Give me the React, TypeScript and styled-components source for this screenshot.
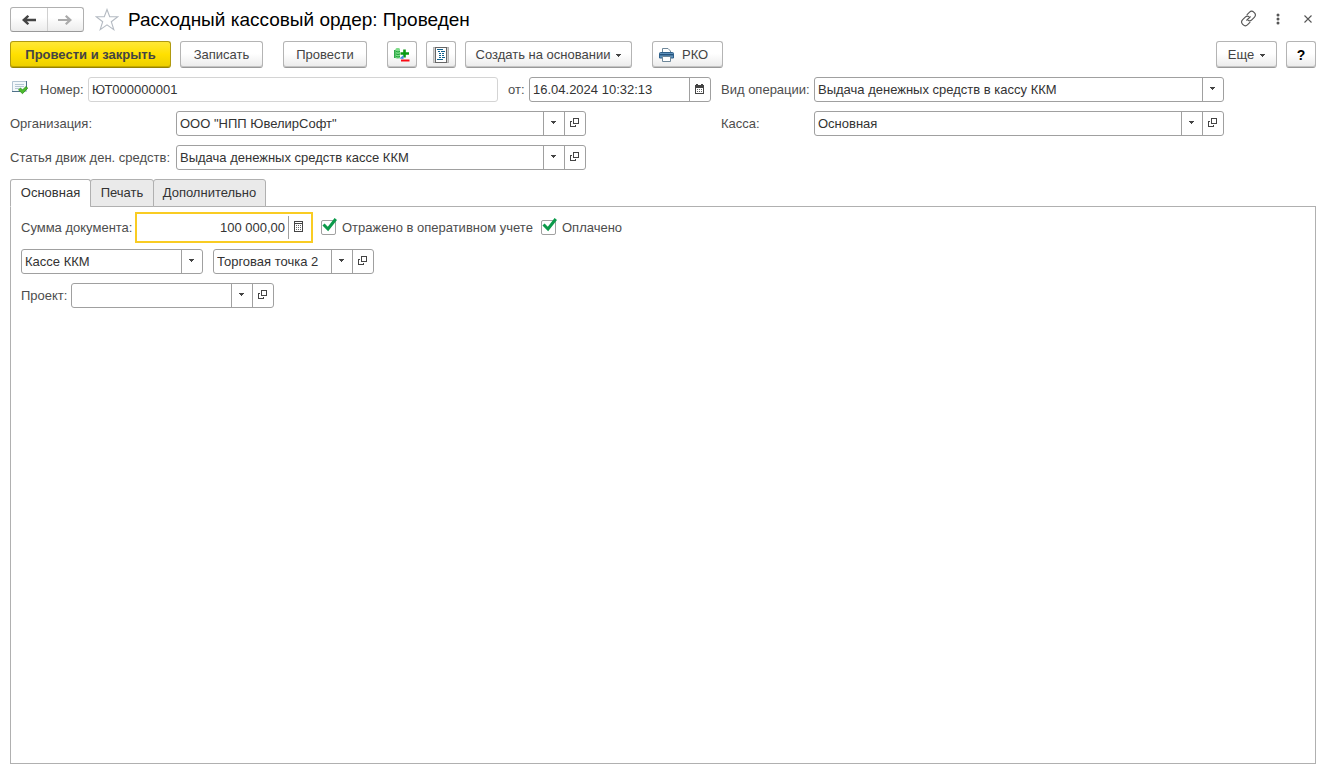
import React from "react";
import styled, { createGlobalStyle, css } from "styled-components";

const GlobalStyle = createGlobalStyle`
  *, *::before, *::after { box-sizing: border-box; }
  body {
    margin: 0;
    background: #fff;
    color: #4d4d4d;
    font-family: "Liberation Sans", Arial, sans-serif;
    font-size: 13px;
    line-height: 16px;
  }
  button, input, select { font: inherit; color: inherit; margin: 0; }
`;

const Page = styled.main`
  display: flex;
  flex-direction: column;
  min-height: 100vh;
  padding: 7px 5px 5px 10px;
`;

const Header = styled.header`
  display: flex;
  align-items: center;
  height: 25px;
`;

const NavGroup = styled.nav`
  display: flex;
  width: 74px;
  height: 25px;
  border: 1px solid #b0b0b0;
  border-bottom-color: #999;
  border-radius: 3px;
  background: linear-gradient(#fff 40%, #ececec);
`;

const NavButton = styled.button`
  display: grid;
  place-items: center;
  flex: 1;
  padding: 0;
  border: 0;
  background: none;
  & + & { border-left: 1px solid #d0d0d0; }
`;

const PlainButton = styled.button`
  display: grid;
  place-items: center;
  width: 30px;
  height: 24px;
  padding: 0;
  border: 0;
  background: none;
`;

const StarButton = styled(PlainButton)`
  margin-left: 8px;
`;

const Title = styled.h1`
  flex: 1;
  margin: 0 0 0 6px;
  color: #000;
  font-size: 19px;
  font-weight: 400;
  line-height: 24px;
`;

const WindowActions = styled.div`
  display: flex;
  margin-right: -7px;
  padding-bottom: 2px;
`;

const Toolbar = styled.div`
  display: flex;
  flex-wrap: wrap;
  gap: 9px;
  margin-top: 9px;
`;

const ToolGroup = styled.div<{ $end?: boolean }>`
  display: flex;
  gap: 9px;
  margin-right: ${(p) => (p.$end ? "0" : "11px")};
  margin-left: ${(p) => (p.$end ? "auto" : "0")};
`;

const Button = styled.button<{ $width: number; $primary?: boolean }>`
  display: flex;
  align-items: center;
  justify-content: center;
  gap: 6px;
  width: ${(p) => p.$width}px;
  height: 27px;
  padding: 1px 0 0;
  border: 1px solid #b4b4b4;
  border-bottom-color: #999;
  border-radius: 3px;
  box-shadow: inset 0 -1px #c4c4c4;
  background: linear-gradient(#fff 45%, #ebebeb);
  color: #444;
  white-space: nowrap;
  ${(p) =>
    p.$primary &&
    css`
      border-color: #b09a10;
      border-bottom-color: #968200;
      box-shadow: inset 0 -1px #c4aa00;
      background: linear-gradient(#ffe838, #ffe000 50%, #ecce00);
      font-weight: 700;
    `}
`;

const HelpButton = styled(Button)`
  color: #000;
  font-size: 14px;
  font-weight: 700;
`;

const PrintButton = styled(Button)`
  justify-content: flex-start;
  gap: 8px;
  padding-left: 6px;
`;

const Form = styled.div`
  display: grid;
  grid-template-columns: minmax(0, 701px) minmax(0, 503px);
  gap: 9px 10px;
  margin-top: 9px;
`;

const Row = styled.div`
  display: flex;
  align-items: center;
  height: 25px;
`;

const Label = styled.label<{ $width: number }>`
  flex: none;
  width: ${(p) => p.$width}px;
  white-space: nowrap;
`;

const StatusMark = styled.span`
  flex: none;
  width: 30px;
  height: 20px;
  padding-left: 2px;
`;

const Field = styled.div<{ $width?: number; $gap?: number; $muted?: boolean }>`
  display: flex;
  flex: ${(p) => (p.$width ? `0 1 ${p.$width}px` : "1")};
  min-width: 0;
  height: 25px;
  margin-right: ${(p) => p.$gap ?? 0}px;
  border: 1px solid ${(p) => (p.$muted ? "#d4d4d4" : "#a0a0a0")};
  border-radius: 3px;
  background: #fff;
  color: #333;
`;

const ActiveField = styled(Field)`
  border-color: transparent;
  border-radius: 0;
  outline: 2px solid #f9cc23;
  outline-offset: 1px;
`;

const TextInput = styled.input<{ $right?: boolean }>`
  flex: 1;
  width: 0;
  min-width: 0;
  padding: 0 3px;
  border: 0;
  outline: 0;
  background: none;
  text-align: ${(p) => (p.$right ? "right" : "left")};
`;

const SelectBox = styled.div`
  display: grid;
  grid-template-columns: minmax(0, 1fr) 21px;
  flex: 1;
  min-width: 0;
`;

const Select = styled.select`
  grid-area: 1 / 1 / 2 / 3;
  width: 100%;
  padding: 0 24px 0 3px;
  border: 0;
  outline: 0;
  appearance: none;
  background: none;
`;

const CaretCell = styled.span`
  display: grid;
  grid-area: 1 / 2;
  place-items: center;
  padding: 0 2px 2px 0;
  border-left: 1px solid #a0a0a0;
  pointer-events: none;
`;

const FieldButton = styled.button`
  display: grid;
  flex: none;
  place-items: center;
  width: 21px;
  padding: 0 1px 2px 0;
  border: 0;
  border-left: 1px solid #a0a0a0;
  background: none;
`;

const Tabs = styled.div`
  display: flex;
  margin-top: 9px;
`;

const Tab = styled.button<{ $active?: boolean; $width: number }>`
  width: ${(p) => p.$width}px;
  height: 28px;
  margin: 0 -1px -1px 0;
  padding: 0;
  border: 1px solid #b0b0b0;
  border-bottom-color: ${(p) => (p.$active ? "#fff" : "#b0b0b0")};
  border-radius: 3px 3px 0 0;
  background: ${(p) => (p.$active ? "#fff" : "#eaeaea")};
  color: #333;
  z-index: 1;
`;

const Panel = styled.section`
  display: flex;
  flex: 1;
  flex-direction: column;
  gap: 9px;
  padding: 8px 10px;
  border: 1px solid #b0b0b0;
`;

const CheckLabel = styled.label<{ $width: number }>`
  display: flex;
  align-items: center;
  gap: 6px;
  width: ${(p) => p.$width}px;
  white-space: nowrap;
`;

const CheckMark = styled.span`
  display: grid;
  width: 15px;
  height: 15px;
  svg { grid-area: 1 / 1; margin-top: -2px; overflow: visible; pointer-events: none; visibility: hidden; }
  input:checked + svg { visibility: visible; }
`;

const CheckInput = styled.input`
  grid-area: 1 / 1;
  width: 15px;
  height: 15px;
  border: 1px solid #a0a0a0;
  border-radius: 2px;
  appearance: none;
`;

const ArrowIcon = ({ flip, color }: { flip?: boolean; color: string }) => (
  <svg width="14" height="10" viewBox="0 0 14 10" fill={color}>
    {flip ? (
      <path d="M0 4h9.500L7 1.500 8.500 0 14 5 8.500 10 7 8.500 9.500 6H0z" />
    ) : (
      <path d="M14 3.700H5L7.200 1.500 5.500 0 0 5l5.500 5 1.700-1.500L5 6.300h9z" />
    )}
  </svg>
);

const StarIcon = () => (
  <svg width="24" height="23" viewBox="0 0 24 23" fill="#fff" stroke="#b4bac2" strokeWidth="1.1">
    <path d="M12 1.500l2.700 7.300h8.100l-6.500 4.900 2.500 7.900-6.800-4.800-6.800 4.800 2.500-7.900-6.500-4.900h8.100z" />
  </svg>
);

const LinkIcon = () => (
  <svg width="17" height="17" viewBox="0 0 24 24" fill="none" stroke="#555" strokeWidth="1.600" strokeLinecap="round">
    <path d="M10 6.500l3.200-3.200a4.600 4.600 0 0 1 6.500 0l.5.5a4.600 4.600 0 0 1 0 6.500l-3.600 3.600a4.600 4.600 0 0 1-5 1" />
    <path d="M14 17.500l-3.200 3.200a4.600 4.600 0 0 1-6.500 0l-.5-.5a4.600 4.600 0 0 1 0-6.500l3.600-3.600a4.600 4.600 0 0 1 5-1" />
    <path d="M9.500 14.500l5-5" />
  </svg>
);

const DotsIcon = () => (
  <svg width="4" height="12" viewBox="0 0 4 12" fill="#555">
    <circle cx="2" cy="2" r="1.500" />
    <circle cx="2" cy="6" r="1.500" />
    <circle cx="2" cy="10" r="1.500" />
  </svg>
);

const CloseIcon = () => (
  <svg width="8" height="8" viewBox="0 0 8 8" stroke="#555" strokeWidth="1.100">
    <path d="M.5.5l7 7M7.500.5l-7 7" />
  </svg>
);

const Caret = () => (
  <svg width="5" height="3" viewBox="0 0 5 3" fill="#444" shapeRendering="crispEdges">
    <path d="M0 0h5v1H0zM1 1h3v1H1zM2 2h1v1H2z" />
  </svg>
);

const OpenIcon = () => (
  <svg width="9" height="9" viewBox="0 0 9 9" fill="none" stroke="#444" shapeRendering="crispEdges">
    <path d="M3.500.5h5v5h-5z" />
    <path d="M2 3.500H.5v5h5V7" />
  </svg>
);

const CalendarIcon = () => (
  <svg width="9" height="10" viewBox="0 0 9 10" shapeRendering="crispEdges">
    <path d="M0 1h9v9H0zM1 4v5h7V4z" fill="#444" fillRule="evenodd" />
    <path d="M1 0h2v1H1zM6 0h2v1H6z" fill="#444" />
    <path d="M2 5h1v1H2zM4 5h1v1H4zM6 5h1v1H6zM2 7h1v1H2zM4 7h1v1H4zM6 7h1v1H6z" fill="#666" />
  </svg>
);

const CalculatorIcon = () => (
  <svg width="9" height="11" viewBox="0 0 9 11" shapeRendering="crispEdges">
    <path d="M0 0h9v11H0zM1 1v1h7V1zM1 3v7h7V3z" fill="#444" fillRule="evenodd" />
    <path d="M2 4h1v1H2zM4 4h1v1H4zM6 4h1v1H6zM2 6h1v1H2zM4 6h1v1H4zM6 6h1v1H6zM2 8h1v1H2zM4 8h1v1H4zM6 8h1v1H6z" fill="#666" />
  </svg>
);

const PostedIcon = () => (
  <svg width="16" height="16" viewBox="0 0 16 16">
    <path d="M.5 1.500h14v10H.5z" fill="#f4f8fb" stroke="#b3c5d3" />
    <path d="M14.500 1v8M0 11.500h8" stroke="#4f7189" fill="none" />
    <path d="M3 4.500h9M3 6.500h9M3 8.500h4" stroke="#b5c6d3" />
    <path d="M6.500 9.800L8.500 8l2 2L14 6.500l1.700 1.700L10.500 13.700z" fill="#4dbb2d" stroke="#2b8f1b" strokeWidth=".8" />
  </svg>
);

const MovementsIcon = () => (
  <svg width="16" height="16" viewBox="0 0 16 16">
    <path d="M0 3h2v8H0z" fill="#2fa848" />
    <path d="M1.500 2.200C1.500.6 6 .6 6 2.200v8.600c0 1.200-4.500 1.200-4.500 0z" fill="#7fdc8a" />
    <path d="M2 4.500q2 1 4 0M2 7q2 1 4 0M2 9.500q2 1 4 0" stroke="#17a032" fill="none" />
    <path d="M10.500 2.500v8M6.500 6.500h8.500" stroke="#0a9a12" strokeWidth="2.600" />
    <path d="M5.500 11.500L9.500 8v4z" fill="#3e8be0" />
    <path d="M7 13.500h8.500" stroke="#fa0a14" strokeWidth="2" />
  </svg>
);

const ReportIcon = () => (
  <svg width="16" height="16" viewBox="0 0 16 16" shapeRendering="crispEdges">
    <path d="M.5.5h15v15H.5z" fill="#d3d3d3" stroke="#b4b4b4" />
    <path d="M2.500.5h11v15h-11z" fill="#fff" stroke="#666" />
    <path d="M4 2.500h6M5 4.500h2M8 4.500h4M6 6.500h2M9 6.500h2M6 8.500h2M9 8.500h2M6 10.500h2M9 10.500h3M4 12.500h6" stroke="#12628e" />
  </svg>
);

const PrinterIcon = () => (
  <svg width="15" height="14" viewBox="0 0 15 14">
    <path d="M3.500 5V.5H9L11.500 3v2" fill="#fff" stroke="#6e8799" />
    <path d="M1.500 4.500h12q1 0 1 1V10H.5V5.500q0-1 1-1z" fill="#5f93bd" stroke="#2e5f8a" />
    <path d="M1 6.700h13" stroke="#24527b" strokeWidth="1.400" />
    <path d="M3.500 8.500h8v5h-8z" fill="#fff" stroke="#6e8799" />
  </svg>
);

const TickIcon = () => (
  <svg width="15" height="15" viewBox="0 0 15 15">
    <path d="M2.500 6.500L7 11 14.800 1" fill="none" stroke="#0b9a4a" strokeWidth="3" />
  </svg>
);

type ComboProps = { id: string; value: string; label?: string; openable?: boolean; width?: number; gap?: number };

const Combo = ({ id, value, label, openable, width, gap }: ComboProps) => (
  <Field $width={width} $gap={gap}>
    <SelectBox>
      <Select id={id} defaultValue={value} aria-label={label}>
        <option value={value}>{value}</option>
      </Select>
      <CaretCell><Caret /></CaretCell>
    </SelectBox>
    {openable && (
      <FieldButton type="button" aria-label="Открыть"><OpenIcon /></FieldButton>
    )}
  </Field>
);

const Check = ({ text, width }: { text: string; width: number }) => (
  <CheckLabel $width={width}>
    <CheckMark>
      <CheckInput type="checkbox" defaultChecked />
      <TickIcon />
    </CheckMark>
    {text}
  </CheckLabel>
);

export default function App() {
  return (
    <>
      <GlobalStyle />
      <Page>
        <Header>
          <NavGroup>
            <NavButton type="button" aria-label="Назад"><ArrowIcon color="#444" /></NavButton>
            <NavButton type="button" aria-label="Вперед"><ArrowIcon flip color="#aaa" /></NavButton>
          </NavGroup>
          <StarButton type="button" aria-label="Избранное"><StarIcon /></StarButton>
          <Title>Расходный кассовый ордер: Проведен</Title>
          <WindowActions>
            <PlainButton type="button" aria-label="Ссылка"><LinkIcon /></PlainButton>
            <PlainButton type="button" aria-label="Меню"><DotsIcon /></PlainButton>
            <PlainButton type="button" aria-label="Закрыть"><CloseIcon /></PlainButton>
          </WindowActions>
        </Header>

        <Toolbar>
          <ToolGroup>
            <Button type="button" $width={161} $primary>Провести и закрыть</Button>
            <Button type="button" $width={83}>Записать</Button>
          </ToolGroup>
          <ToolGroup>
            <Button type="button" $width={84}>Провести</Button>
          </ToolGroup>
          <ToolGroup>
            <Button type="button" $width={30} aria-label="Движения документа"><MovementsIcon /></Button>
            <Button type="button" $width={30} aria-label="Отчет"><ReportIcon /></Button>
            <Button type="button" $width={167}>Создать на основании <Caret /></Button>
          </ToolGroup>
          <PrintButton type="button" $width={71}><PrinterIcon />РКО</PrintButton>
          <ToolGroup $end>
            <Button type="button" $width={61}>Еще <Caret /></Button>
            <HelpButton type="button" $width={30}>?</HelpButton>
          </ToolGroup>
        </Toolbar>

        <Form>
          <Row>
            <StatusMark><PostedIcon /></StatusMark>
            <Label htmlFor="number" $width={48}>Номер:</Label>
            <Field $muted $gap={10}><TextInput id="number" defaultValue="ЮТ000000001" /></Field>
            <Label htmlFor="date" $width={21}>от:</Label>
            <Field $width={182}>
              <TextInput id="date" defaultValue="16.04.2024 10:32:13" />
              <FieldButton type="button" aria-label="Календарь"><CalendarIcon /></FieldButton>
            </Field>
          </Row>
          <Row>
            <Label htmlFor="operation" $width={93}>Вид операции:</Label>
            <Combo id="operation" value="Выдача денежных средств в кассу ККМ" />
          </Row>
          <Row>
            <Label htmlFor="company" $width={166}>Организация:</Label>
            <Combo id="company" value={'ООО "НПП ЮвелирСофт"'} openable width={410} />
          </Row>
          <Row>
            <Label htmlFor="cashbox" $width={93}>Касса:</Label>
            <Combo id="cashbox" value="Основная" openable />
          </Row>
          <Row>
            <Label htmlFor="article" $width={166}>Статья движ ден. средств:</Label>
            <Combo id="article" value="Выдача денежных средств кассе ККМ" openable width={410} />
          </Row>
        </Form>

        <Tabs role="tablist">
          <Tab type="button" role="tab" aria-selected $active $width={81}>Основная</Tab>
          <Tab type="button" role="tab" $width={64}>Печать</Tab>
          <Tab type="button" role="tab" $width={113}>Дополнительно</Tab>
        </Tabs>
        <Panel role="tabpanel">
          <Row>
            <Label htmlFor="sum" $width={117}>Сумма документа:</Label>
            <ActiveField $width={172} $gap={11}>
              <TextInput id="sum" $right defaultValue="100 000,00" />
              <FieldButton type="button" aria-label="Калькулятор"><CalculatorIcon /></FieldButton>
            </ActiveField>
            <Check text="Отражено в оперативном учете" width={220} />
            <Check text="Оплачено" width={90} />
          </Row>
          <Row>
            <Combo id="receiver" label="Получатель" value="Кассе ККМ" width={182} gap={10} />
            <Combo id="outlet" label="Торговая точка" value="Торговая точка 2" openable width={161} />
          </Row>
          <Row>
            <Label htmlFor="project" $width={50}>Проект:</Label>
            <Combo id="project" value="" openable width={203} />
          </Row>
        </Panel>
      </Page>
    </>
  );
}
